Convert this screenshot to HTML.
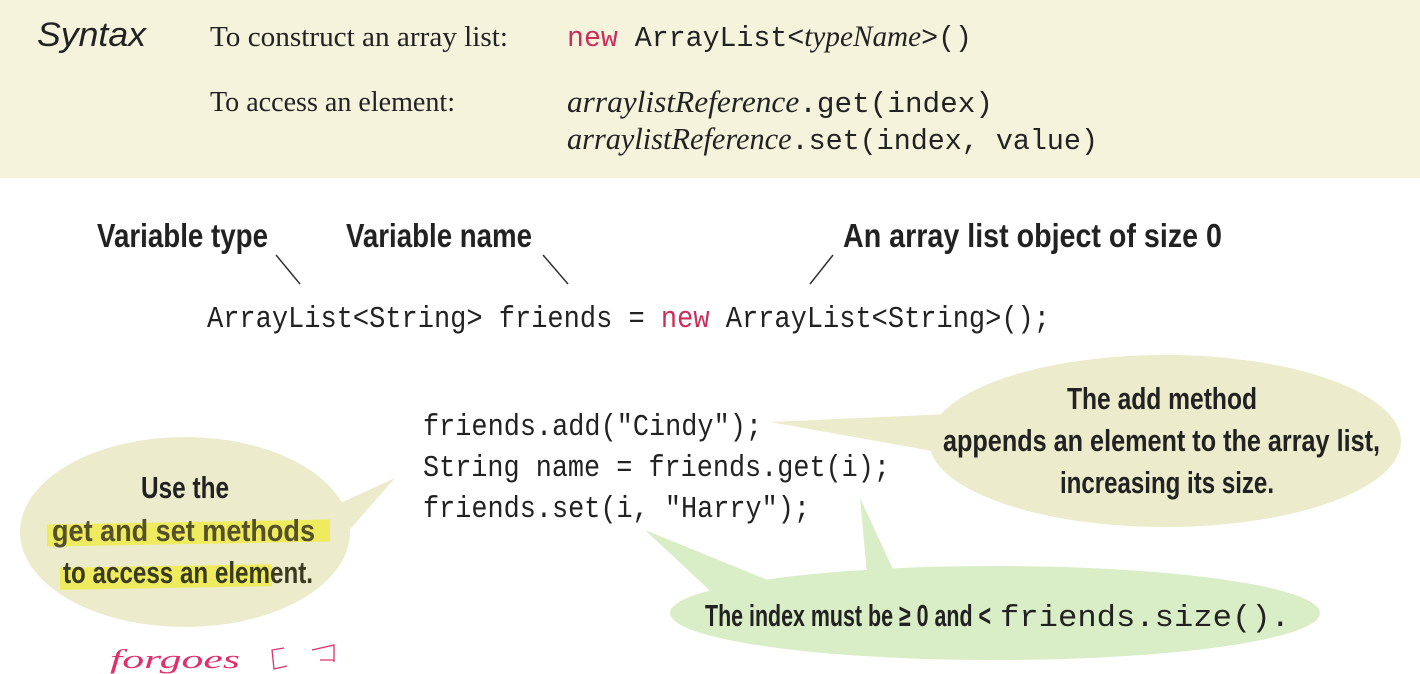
<!DOCTYPE html>
<html><head><style>
html,body{margin:0;padding:0;background:#fff;}
svg{display:block}
</style></head><body>
<svg width="1420" height="674" viewBox="0 0 1420 674" xmlns="http://www.w3.org/2000/svg">
<rect x="0" y="0" width="1420" height="178" fill="#f6f3dd"/>
<g fill="#222">
<text x="37" y="46" font-family="Liberation Sans, sans-serif" font-style="italic" font-size="34" textLength="109" lengthAdjust="spacingAndGlyphs">Syntax</text>
<text x="210" y="46" font-family="Liberation Serif, serif" font-size="28" textLength="298" lengthAdjust="spacingAndGlyphs">To construct an array list:</text>
<text x="210" y="111" font-family="Liberation Serif, serif" font-size="28" textLength="245" lengthAdjust="spacingAndGlyphs">To access an element:</text>
<text x="567" y="46" font-family="Liberation Mono, monospace" font-size="29" textLength="405" lengthAdjust="spacingAndGlyphs"><tspan fill="#c8305c">new</tspan> ArrayList&lt;<tspan font-family="Liberation Serif, serif" font-style="italic" font-size="30">typeName</tspan>&gt;()</text>
<text x="567" y="112" font-family="Liberation Mono, monospace" font-size="29" textLength="426" lengthAdjust="spacingAndGlyphs"><tspan font-family="Liberation Serif, serif" font-style="italic" font-size="31">arraylistReference</tspan>.get(index)</text>
<text x="567" y="149" font-family="Liberation Mono, monospace" font-size="29" textLength="531" lengthAdjust="spacingAndGlyphs"><tspan font-family="Liberation Serif, serif" font-style="italic" font-size="31">arraylistReference</tspan>.set(index, value)</text>

<g font-family="Liberation Sans, sans-serif" font-weight="bold" font-size="33">
<text x="97" y="247" textLength="171" lengthAdjust="spacingAndGlyphs">Variable type</text>
<text x="346" y="247" textLength="186" lengthAdjust="spacingAndGlyphs">Variable name</text>
<text x="843" y="247" textLength="379" lengthAdjust="spacingAndGlyphs">An array list object of size 0</text>
</g>
<g stroke="#333" stroke-width="1.5">
<line x1="276" y1="255" x2="300" y2="284"/>
<line x1="543" y1="255" x2="568" y2="284"/>
<line x1="833" y1="255" x2="810" y2="284"/>
</g>
<text x="207" y="327" font-family="Liberation Mono, monospace" font-size="31" textLength="843" lengthAdjust="spacingAndGlyphs">ArrayList&lt;String&gt; friends = <tspan fill="#c8305c">new</tspan> ArrayList&lt;String&gt;();</text>
</g>

<!-- bubbles -->
<ellipse cx="185" cy="532" rx="165" ry="95" fill="#ecebcb"/>
<polygon points="395,478 325,510 345,535" fill="#ecebcb"/>
<ellipse cx="1165" cy="441" rx="236" ry="86" fill="#ecebcb"/>
<polygon points="770,422 950,414 955,455" fill="#ecebcb"/>
<ellipse cx="995" cy="613" rx="325" ry="47" fill="#d9edc6"/>
<polygon points="645,530 780,585 720,600" fill="#d9edc6"/>
<polygon points="860,498 868,585 898,580" fill="#d9edc6"/>

<g fill="#222" font-family="Liberation Mono, monospace" font-size="31">
<text x="423" y="435" textLength="339" lengthAdjust="spacingAndGlyphs">friends.add("Cindy");</text>
<text x="423" y="476" textLength="467" lengthAdjust="spacingAndGlyphs">String name = friends.get(i);</text>
<text x="423" y="517" textLength="387" lengthAdjust="spacingAndGlyphs">friends.set(i, "Harry");</text>
</g>

<rect x="47" y="522" width="283" height="22" fill="#eeec5e" transform="rotate(-1 190 533)"/>
<rect x="60" y="566" width="212" height="22" fill="#eeec5e" transform="rotate(-1 166 577)"/>

<g fill="#222" font-family="Liberation Sans, sans-serif" font-weight="bold" font-size="31">
<text x="141" y="498" textLength="88" lengthAdjust="spacingAndGlyphs">Use the</text>
<text x="52" y="541" textLength="263" lengthAdjust="spacingAndGlyphs" fill="#55502a">get and set methods</text>
<text x="63" y="583" textLength="250" lengthAdjust="spacingAndGlyphs" fill="#3a3a20">to access an element.</text>
<text x="1067" y="409" textLength="190" lengthAdjust="spacingAndGlyphs">The add method</text>
<text x="943" y="451" textLength="437" lengthAdjust="spacingAndGlyphs">appends an element to the array list,</text>
<text x="1060" y="493" textLength="214" lengthAdjust="spacingAndGlyphs">increasing its size.</text>
<text x="705" y="626" textLength="286" lengthAdjust="spacingAndGlyphs">The index must be ≥ 0 and &lt;</text>
<text x="1000" y="626" font-family="Liberation Mono, monospace" font-weight="normal" textLength="290" lengthAdjust="spacingAndGlyphs">friends.size().</text>
</g>

<g fill="none" stroke="#e0306a" stroke-width="1.3">
<text x="110" y="668" font-family="Liberation Serif, serif" font-style="italic" font-size="26" fill="#e0306a" stroke="none" textLength="130" lengthAdjust="spacingAndGlyphs">forgoes</text>
<path d="M284,648 L272,650 L274,669 L287,666"/>
<path d="M312,650 L334,645 L334,662 M320,660 L334,660"/>
</g>
</svg>
</body></html>
